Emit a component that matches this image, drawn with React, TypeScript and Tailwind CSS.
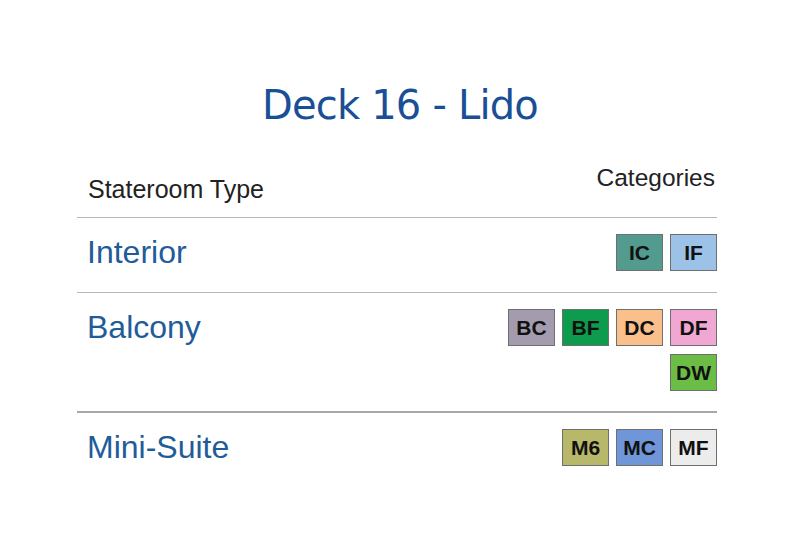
import React from "react";

type Badge = { code: string; bg: string };

const Cat = ({ code, bg }: Badge) => (
  <div
    className={`w-[47px] h-[37px] border border-[#6f6f6f] flex items-center justify-center text-[21px] font-bold text-[#111] ${bg}`}
    style={{ fontFamily: '"Liberation Sans", Arial, sans-serif' }}
  >
    {code}
  </div>
);

export default function App() {
  return (
    <div className="w-[800px] h-[534px] bg-white overflow-hidden" style={{ fontFamily: '"Liberation Sans", Arial, sans-serif' }}>
      <h1
        className="pt-[85px] text-center text-[40px] leading-[40px] tracking-[-0.8px] text-[#1a4f96]"
        style={{ fontFamily: '"Comic Sans MS", "DejaVu Sans", sans-serif' }}
      >
        Deck 16 - Lido
      </h1>
      <div className="ml-[77px] w-[640px] mt-[41px]">
        <div className="flex items-end justify-between pb-[16px] border-b border-[#b8b8b8] pl-[11px] pr-[2px]">
          <div className="text-[25px] leading-[24px] text-[#222]">Stateroom Type</div>
          <div className="text-[24.5px] leading-[24px] text-[#222] mb-[11px]">Categories</div>
        </div>
        <div className="flex items-start justify-between pt-[16px] pb-[21px] border-b border-[#b8b8b8] pl-[10px]">
          <div className="text-[32px] leading-[37px] text-[#1f5c99]">Interior</div>
          <div className="w-[215px] flex flex-wrap justify-end gap-x-[7px] gap-y-[8px]">
            <Cat code="IC" bg="bg-[#529b8e]" />
            <Cat code="IF" bg="bg-[#9cc2e8]" />
          </div>
        </div>
        <div className="flex items-start justify-between pt-[16px] pb-[20px] border-b-2 border-[#a8a8a8] pl-[10px]">
          <div className="text-[32px] leading-[37px] text-[#1f5c99]">Balcony</div>
          <div className="w-[215px] flex flex-wrap justify-end gap-x-[7px] gap-y-[8px]">
            <Cat code="BC" bg="bg-[#a49cae]" />
            <Cat code="BF" bg="bg-[#0d9b4e]" />
            <Cat code="DC" bg="bg-[#fbbf8b]" />
            <Cat code="DF" bg="bg-[#f0a8d2]" />
            <Cat code="DW" bg="bg-[#6cbd45]" />
          </div>
        </div>
        <div className="flex items-start justify-between pt-[16px] pl-[10px]">
          <div className="text-[32px] leading-[37px] text-[#1f5c99]">Mini-Suite</div>
          <div className="w-[215px] flex flex-wrap justify-end gap-x-[7px] gap-y-[8px]">
            <Cat code="M6" bg="bg-[#b8b86a]" />
            <Cat code="MC" bg="bg-[#6e96d8]" />
            <Cat code="MF" bg="bg-[#ececec]" />
          </div>
        </div>
      </div>
    </div>
  );
}
